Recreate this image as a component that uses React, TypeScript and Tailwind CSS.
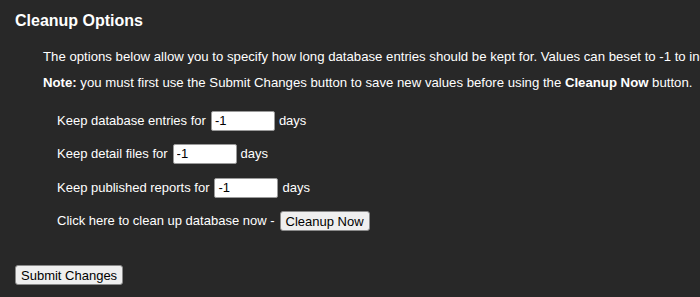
import React from "react";

const rows = [
  { label: "Keep database entries for", value: "-1" },
  { label: "Keep detail files for", value: "-1" },
  { label: "Keep published reports for", value: "-1" },
];

function DaysInput({ value }: { value: string }) {
  return (
    <input
      type="text"
      defaultValue={value}
      className="ml-[5px] mr-[4px] h-[20px] w-[64px] rounded-[2px] border border-[#9a9a9a] bg-white px-[3px] text-[13px] text-black outline-none"
    />
  );
}

function GrayButton({ children }: { children: React.ReactNode }) {
  return (
    <button
      type="button"
      className="h-[20px] rounded-[3px] border border-[#8a8a8a] bg-[#efefef] px-[5px] text-[13px] leading-none text-black"
    >
      {children}
    </button>
  );
}

export default function App() {
  return (
    <div className="min-h-[297px] w-full overflow-hidden bg-[#282828] px-[15px] pt-[11px] font-['Liberation_Sans',Arial,sans-serif] text-[13px] text-white">
      {/* Title */}
      <h2 className="text-[16px] font-bold leading-5">Cleanup Options</h2>

      {/* Intro */}
      <p className="ml-[28px] mt-[16px] whitespace-nowrap text-[13.2px] leading-5">
        The options below allow you to specify how long database entries should be kept for. Values can beset to -1 to indicate that entries should never be removed.
      </p>
      <p className="ml-[28px] mt-[6px] whitespace-nowrap text-[13.2px] leading-5">
        <b>Note:</b> you must first use the Submit Changes button to save new values before using the <b>Cleanup Now</b> button.
      </p>

      {/* Settings */}
      <div className="ml-[42px] mt-[18px] flex flex-col gap-[13.4px]">
        {rows.map((row) => (
          <div key={row.label} className="flex h-[20px] items-center leading-5">
            <span>{row.label}</span>
            <DaysInput value={row.value} />
            <span>days</span>
          </div>
        ))}
        <div className="flex h-[20px] items-center leading-5">
          <span className="mr-[5px]">Click here to clean up database now -</span>
          <GrayButton>Cleanup Now</GrayButton>
        </div>
      </div>

      <div className="mt-[34px]">
        <GrayButton>Submit Changes</GrayButton>
      </div>
    </div>
  );
}
